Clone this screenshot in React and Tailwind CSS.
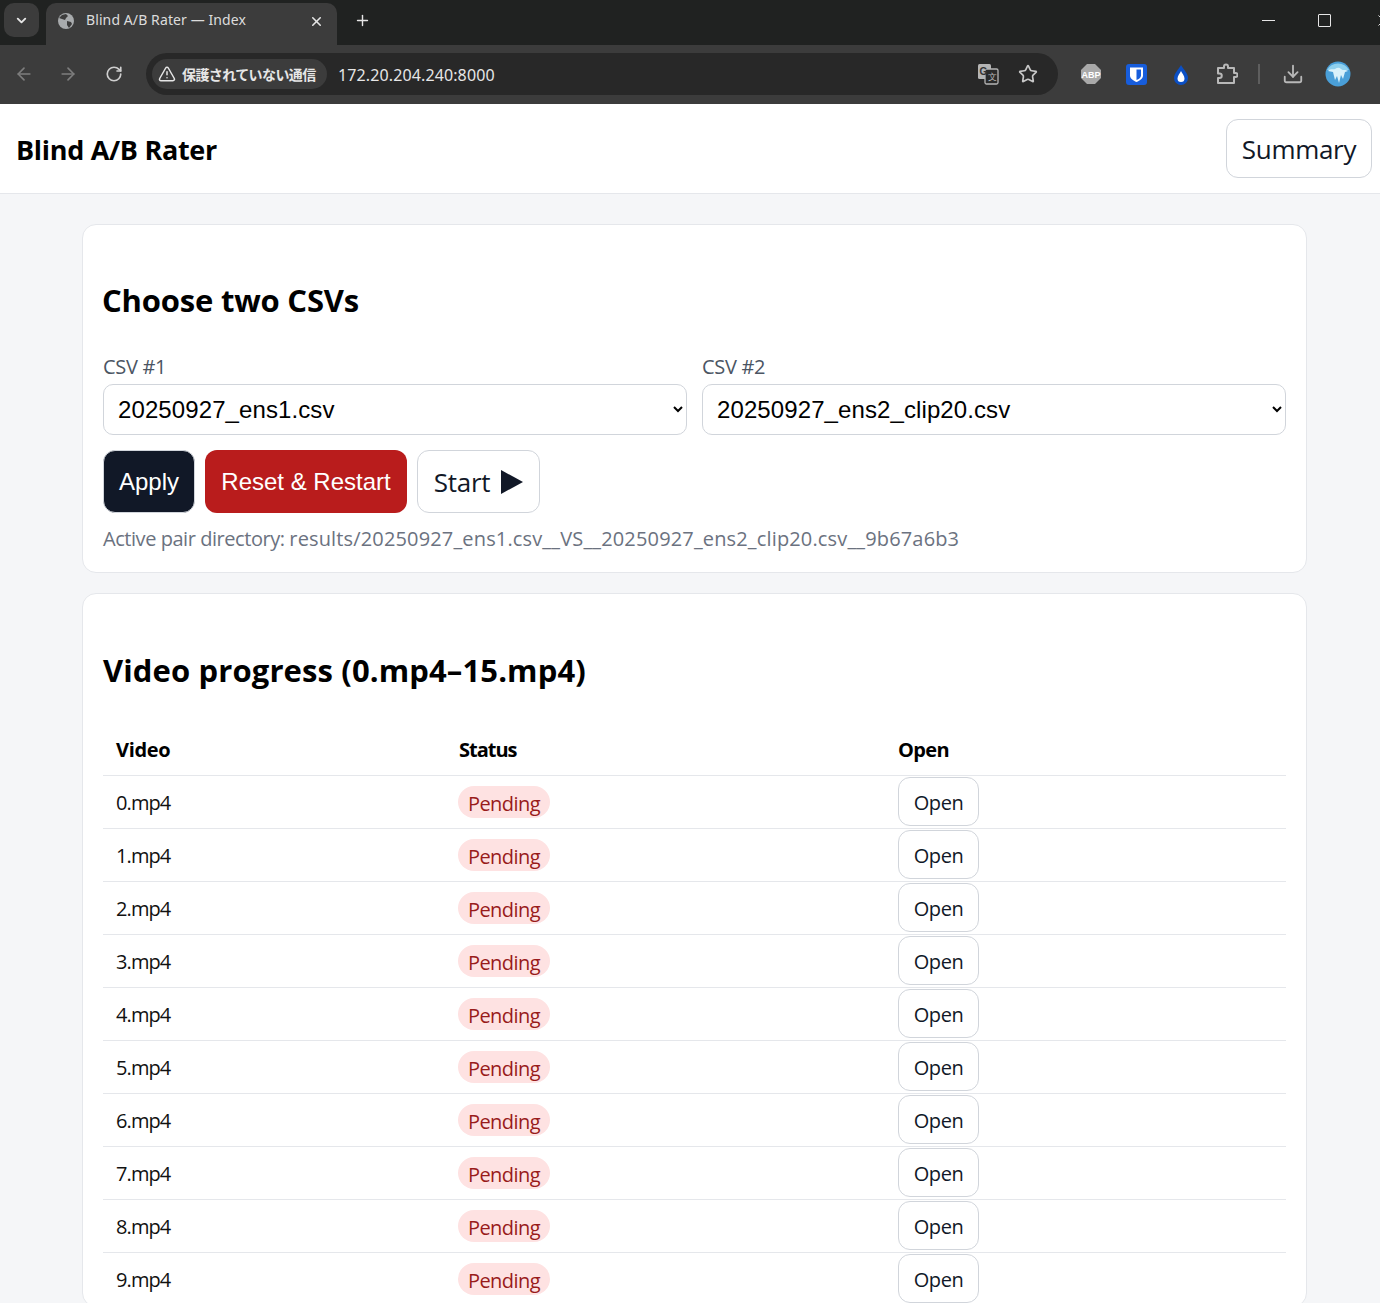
import { ChevronDown, X, Plus, ArrowLeft, ArrowRight, RotateCw, TriangleAlert, Star, Download } from 'lucide-react'

const ui = "font-['Open_Sans','Noto_Sans',sans-serif]"
const rows = ['0.mp4', '1.mp4', '2.mp4', '3.mp4', '4.mp4', '5.mp4', '6.mp4', '7.mp4', '8.mp4', '9.mp4']

function Globe() {
  return (
    <svg width="18" height="18" viewBox="0 0 18 18">
      <circle cx="9" cy="9" r="8" fill="#a8abad" />
      <path d="M5 3l4-1 2 2-2 2-1 2-3-1-3-1zM10 9l4 1 1 2-3 4-2-3z" fill="#3c3c3c" />
    </svg>
  )
}

function Translate() {
  return (
    <svg width="22" height="22" viewBox="0 0 22 22">
      <rect x="1" y="1" width="13" height="15" rx="1.5" fill="#b5b5b5" />
      <rect x="8" y="6" width="13" height="15" rx="1.5" fill="#2a2a2a" stroke="#b5b5b5" strokeWidth="1.3" />
      <text x="2.5" y="12" fontSize="10" fontWeight="700" fill="#333" fontFamily="Liberation Sans">G</text>
      <text x="11" y="17" fontSize="9" fill="#b5b5b5" fontFamily="Liberation Sans">文</text>
    </svg>
  )
}

function Abp() {
  return (
    <svg width="22" height="22" viewBox="0 0 22 22">
      <polygon points="7,1 15,1 21,7 21,15 15,21 7,21 1,15 1,7" fill="#a9a9a9" />
      <text x="11" y="14.5" textAnchor="middle" fontSize="9" fontWeight="700" fill="#fff" fontFamily="Liberation Sans">ABP</text>
    </svg>
  )
}

function Shield() {
  return (
    <svg width="21" height="21" viewBox="0 0 21 21">
      <rect width="21" height="21" rx="3" fill="#175ddc" />
      <path d="M4 3.500h13v8c0 3-3 5-6.500 6.500C7 16.500 4 14.500 4 11.500z" fill="#fff" />
      <path d="M10.500 5.500H15v6c0 2-2 3.500-4.500 4.500z" fill="#175ddc" />
    </svg>
  )
}

function Drop() {
  return (
    <svg width="16" height="21" viewBox="0 0 16 21">
      <path d="M8 1c2 4 7 8 7 13a7 7 0 0 1-14 0C1 9 6 5 8 1z" fill="#0b4fc4" />
      <path d="M8 7c1 2.500 3.500 4.500 3.500 7.500a3.500 3.500 0 0 1-7 0C4.500 11.500 7 9.500 8 7z" fill="#fff" />
    </svg>
  )
}

// chrome's extensions button, not the lucide puzzle
function ExtPiece() {
  return (
    <svg width="22" height="22" viewBox="0 0 22 22" fill="none" stroke="#b8b8b8" strokeWidth="2" strokeLinejoin="round">
      <path d="M2 5h6V3.500a2 2 0 0 1 4 0V5h6v5h1.500a2 2 0 0 1 0 4H18v6H2v-5h1.500a2 2 0 0 0 0-4.500H2z" />
    </svg>
  )
}

function Avatar() {
  return (
    <svg width="26" height="26" viewBox="0 0 26 26">
      <circle cx="13" cy="13" r="12.500" fill="#4a9fd8" />
      <path d="M2 9a12.500 12.500 0 0 1 22 0z" fill="#8fd0ee" />
      <path d="M3 10c3-3 5-1 7-2s4-2 6 0 5 0 7 2l-3 1-2 7-2-4-2 8-2-7-2 4-2-8z" fill="#d9f1fb" />
    </svg>
  )
}

function BrowserChrome() {
  return (
    <div className="bg-[#3c3c3c]">
      <div className="h-[45px] bg-[#202221] flex items-end relative overflow-hidden">
        <div className="ml-1 mb-[8px] w-[35px] h-[34px] rounded-[10px] bg-[#3c3c3c] flex items-center justify-center">
          <ChevronDown size={15} strokeWidth={3} color="#e6e6e6" />
        </div>
        <div className="ml-[7px] w-[291px] h-[42px] bg-[#3c3c3c] rounded-t-[10px] flex items-center pl-[11px] pr-[13px] pb-[6px]">
          <Globe />
          <span className="ml-[11px] text-[14px] leading-[18px] pb-[2px] text-[#dcdcdc] font-['Noto_Sans',sans-serif] flex-1 whitespace-nowrap tracking-[0.1px]">Blind A/B Rater — Index</span>
          <X size={15} strokeWidth={2.500} color="#e6e6e6" />
        </div>
        <div className="ml-[17px] mb-[16px]">
          <Plus size={17} strokeWidth={2} color="#e6e6e6" />
        </div>
        <div className="ml-auto flex items-center h-full -mr-[13px] pb-[4px]">
          <div className="w-[13px] h-[1px] bg-[#e6e6e6]" />
          <div className="ml-[43px] w-[13px] h-[13px] border border-[#e6e6e6] rounded-[1px]" />
          <X size={19} strokeWidth={1.200} color="#e6e6e6" className="ml-[43px] shrink-0" />
        </div>
      </div>
      <div className="h-[59px] flex items-center pb-[1px]">
        <ArrowLeft size={20} strokeWidth={2} color="#7d7d7d" className="ml-[14px]" />
        <ArrowRight size={20} strokeWidth={2} color="#7d7d7d" className="ml-[24px]" />
        <RotateCw size={18} strokeWidth={2.200} color="#cfcfcf" className="ml-[27px]" />
        <div className="ml-[23px] w-[912px] h-[42px] rounded-full bg-[#282828] flex items-center pl-[6px]">
          <div className="h-[30px] w-[175px] rounded-full bg-[#3c3c3c] flex items-center pl-[6px]">
            <TriangleAlert size={18} strokeWidth={2} color="#e6e6e6" />
            <span className="ml-[6px] text-[14px] font-semibold text-[#e6e6e6] whitespace-nowrap font-['Noto_Sans_CJK_JP',sans-serif] tracking-[-0.6px]">保護されていない通信</span>
          </div>
          <span className="ml-[11px] pt-[1px] text-[16px] text-[#e6e6e6] font-['Noto_Sans',sans-serif] tracking-[0.12px]">172.20.204.240:8000</span>
          <div className="ml-auto flex items-center mr-[20px] gap-[19px]">
            <Translate />
            <Star size={20} strokeWidth={2} color="#c8c8c8" />
          </div>
        </div>
        <div className="ml-[22px] flex items-center">
          <Abp />
          <div className="ml-[24px]"><Shield /></div>
          <div className="ml-[26px]"><Drop /></div>
          <div className="ml-[27px]"><ExtPiece /></div>
          <div className="ml-[20px] w-[2px] h-[20px] bg-[#5e5e5e]" />
          <Download size={22} strokeWidth={2} color="#b8b8b8" className="ml-[22px]" />
          <div className="ml-[21px]"><Avatar /></div>
        </div>
      </div>
    </div>
  )
}

function Pending() {
  return (
    <span className="inline-block h-[32px] w-[92px] rounded-full bg-[#fee2e2] text-[#991b1b] text-[20px] leading-[36px] text-center tracking-[-0.55px]">Pending</span>
  )
}

export default function App() {
  return (
    <div className={`h-[1303px] overflow-hidden bg-[#f5f6f8] ${ui}`}>
      <BrowserChrome />
      <header className="h-[90px] bg-white border-b border-[#e5e7eb] flex items-center justify-between pl-[16px] pr-[8px]">
        <h1 className="text-[27px] leading-[40px] pt-[2px] font-bold text-black tracking-[-0.3px]">Blind A/B Rater</h1>
        <button className="h-[59px] w-[146px] rounded-[12px] border border-[#d1d5db] bg-white text-[26px] leading-[36px] pt-[1px] text-[#111827] tracking-[-0.3px]">Summary</button>
      </header>
      <main className="w-[1225px] ml-[82px] mt-[30px] flex flex-col gap-[20px]">
        <section className="h-[349px] rounded-[14px] bg-white border border-[#e5e7eb] px-[20px]">
          <h2 className="mt-[51px] h-[48px] -ml-[1px] text-[31px] leading-[48px] font-bold text-black tracking-[-0.2px]">Choose two CSVs</h2>
          <div className="mt-[28px] grid grid-cols-2 gap-[15px]">
            <label className="block">
              <span className="block h-[32px] text-[20px] leading-[30px] text-[#4b5563] tracking-[-0.3px]">CSV #1</span>
              <select defaultValue="a" className="w-full h-[51px] rounded-[10px] border border-[#d1d5db] bg-white pl-[10px] pr-[2px] text-[24px] tracking-[0.1px] text-black font-['Liberation_Sans',sans-serif]">
                <option value="a">20250927_ens1.csv</option>
              </select>
            </label>
            <label className="block">
              <span className="block h-[32px] text-[20px] leading-[30px] text-[#4b5563] tracking-[-0.3px]">CSV #2</span>
              <select defaultValue="b" className="w-full h-[51px] rounded-[10px] border border-[#d1d5db] bg-white pl-[10px] pr-[2px] text-[24px] tracking-[0.1px] text-black font-['Liberation_Sans',sans-serif]">
                <option value="b">20250927_ens2_clip20.csv</option>
              </select>
            </label>
          </div>
          <div className="mt-[15px] flex gap-[10px]">
            <button className="h-[63px] w-[92px] rounded-[12px] bg-[#111827] border border-[#d1d5db] text-white text-[24px] font-['Liberation_Sans',sans-serif]">Apply</button>
            <button className="h-[63px] w-[202px] rounded-[12px] bg-[#b91c1c] text-white text-[24px] font-['Liberation_Sans',sans-serif]">Reset &amp; Restart</button>
            <button className="h-[63px] w-[123px] rounded-[12px] bg-white border border-[#d1d5db] text-[#111827] text-[26px] flex items-center justify-center gap-[10px] tracking-[-0.3px]">
              <span className="pt-[2px] pl-[1px]">Start</span>
              <svg width="24" height="26" viewBox="0 0 24 26"><path d="M1 1l22 12L1 25z" fill="#111827" /></svg>
            </button>
          </div>
          <p className="mt-[10px] text-[20px] leading-[32px] text-[#6b7280] whitespace-nowrap">
            <span className="tracking-[-0.45px]">Active pair directory: </span>
            <span className="tracking-[0.15px]">results/20250927_ens1.csv__VS__20250927_ens2_clip20.csv__9b67a6b3</span>
          </p>
        </section>
        <section className="rounded-[14px] bg-white border border-[#e5e7eb] px-[20px]">
          <h2 className="mt-[52px] h-[48px] text-[31px] leading-[48px] font-bold text-black tracking-[0.12px]">Video progress (0.mp4–15.mp4)</h2>
          <table className="mt-[31px] w-full table-fixed">
            <thead>
              <tr className="border-b border-[#e5e7eb] h-[50px] text-left text-[20px] text-black">
                <th className="w-[343px] pl-[13px] font-bold tracking-[-0.3px]">Video</th>
                <th className="w-[440px] pl-[13px] font-bold tracking-[-1px]">Status</th>
                <th className="pl-[12px] font-bold tracking-[-0.6px]">Open</th>
              </tr>
            </thead>
            <tbody>
              {rows.map((name) => (
                <tr key={name} className="border-b border-[#e5e7eb] h-[53px]">
                  <td className="pl-[13px] pt-[2px] text-[20px] text-[#111] tracking-[-0.9px]">{name}</td>
                  <td className="pl-[12px]"><Pending /></td>
                  <td className="pl-[12px]">
                    <button className="block h-[49px] w-[81px] rounded-[12px] border border-[#d1d5db] bg-white text-[20px] leading-[30px] pt-[2px] text-[#111827] tracking-[-0.4px]">Open</button>
                  </td>
                </tr>
              ))}
            </tbody>
          </table>
        </section>
      </main>
    </div>
  )
}
